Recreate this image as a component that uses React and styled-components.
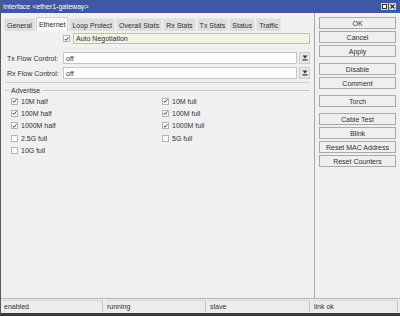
import React from "react";
import styled, { createGlobalStyle } from "styled-components";

const Global = createGlobalStyle`
  html, body { margin: 0; padding: 0; background: #3a3a3a; }
  body { font-family: "Liberation Sans", Arial, sans-serif; font-size: 7px; color: #303030; }
  * { box-sizing: border-box; }
`;

const Window = styled.div`
  width: 400px;
  height: 316px;
  display: flex;
  flex-direction: column;
  background: #f0f0f0;
  border-left: 1px solid #5a5a5a;
  border-bottom: 3px solid #3c3c3c;
  overflow: hidden;
`;

const TitleBar = styled.div`
  height: 13px;
  flex: none;
  background: #3f58a6;
  color: #fff;
  display: flex;
  align-items: center;
  padding: 0 4px 0 2px;
`;

const TitleText = styled.span`
  flex: 1;
  white-space: nowrap;
`;

const TitleBtn = styled.span`
  width: 7px;
  height: 7px;
  margin-left: 1px;
  background: #f4f4f4;
  border: 1px solid #d0d0d0;
  display: flex;
  align-items: center;
  justify-content: center;
`;

const Body = styled.div`
  flex: 1;
  display: flex;
  border-bottom: 1px solid #b8b8b8;
`;

const Main = styled.div`
  width: 314px;
  flex: none;
  border-right: 1px solid #a9a9a9;
  display: flex;
  flex-direction: column;
`;

const Tabs = styled.div`
  display: flex;
  gap: 1px;
  margin: 4px 0 0 3px;
  height: 14px;
  align-items: flex-end;
`;

const Tab = styled.div`
  height: ${(p) => (p.$active ? 14 : 13)}px;
  padding: 0 2px;
  display: flex;
  align-items: center;
  background: ${(p) => (p.$active ? "#fafafa" : "#dedede")};
  border: 1px solid ${(p) => (p.$active ? "#cfcfcf" : "#e6e6e6")};
  border-bottom: none;
  white-space: nowrap;
`;

const AutoRow = styled.div`
  display: flex;
  align-items: center;
  margin: 2px 4px 0 62px;
  height: 11px;
  gap: 3px;
`;

const AutoField = styled.div`
  flex: 1;
  height: 11px;
  background: #f2f3e4;
  border: 1px solid #bfc1ad;
  display: flex;
  align-items: center;
  padding-left: 2px;
`;

const FieldRow = styled.div`
  display: flex;
  align-items: center;
  height: 12px;
  margin: ${(p) => p.$mt}px 4px 0 6px;
`;

const Label = styled.span`
  width: 56px;
  flex: none;
  white-space: nowrap;
`;

const Input = styled.div`
  flex: 1;
  height: 12px;
  background: #fff;
  border: 1px solid #c6c6c6;
  display: flex;
  align-items: center;
  padding-left: 2px;
`;

const DropBtn = styled.div`
  width: 11px;
  height: 12px;
  margin-left: 2px;
  background: #e6e6e6;
  border: 1px solid #cdcdcd;
  display: flex;
  align-items: center;
  justify-content: center;
`;

const Separator = styled.div`
  height: 1px;
  background: #d0d0d0;
  margin: 3px 4px 0 4px;
`;

const GroupTitle = styled.div`
  display: flex;
  align-items: center;
  margin: 2px 4px 0 4px;
  height: 10px;
  gap: 2px;
  &::before {
    content: "";
    width: 4px;
    height: 1px;
    background: #c8c8c8;
  }
  &::after {
    content: "";
    flex: 1;
    height: 1px;
    background: #c8c8c8;
  }
`;

const CheckGrid = styled.div`
  display: grid;
  grid-template-columns: 151px 1fr;
  grid-auto-rows: 12.3px;
  margin: 0 0 0 10px;
`;

const CheckItem = styled.div`
  display: flex;
  align-items: center;
  gap: 3px;
  white-space: nowrap;
`;

const Box = styled.span`
  width: 7px;
  height: 7px;
  flex: none;
  background: #fbfbfb;
  border: 1px solid #b5b5b5;
  display: flex;
  align-items: center;
  justify-content: center;
`;

const Sidebar = styled.div`
  flex: 1;
  display: flex;
  flex-direction: column;
  padding: 4px 4px 0 4px;
  gap: 2px;
`;

const Button = styled.div`
  height: 12px;
  flex: none;
  margin-top: ${(p) => (p.$group ? 4 : 0)}px;
  background: #efefef;
  border: 1px solid #a9a9a9;
  display: flex;
  align-items: center;
  justify-content: center;
  white-space: nowrap;
`;

const StatusBar = styled.div`
  height: 14px;
  flex: none;
  display: flex;
  padding: 1px 2px 0 2px;
  gap: 3px;
  background: #ececec;
`;

const StatusCell = styled.div`
  width: ${(p) => p.$w}px;
  flex: ${(p) => (p.$grow ? 1 : "none")};
  height: 12px;
  border-top: 1px solid #d6d6d6;
  border-right: 1px solid #c4c4c4;
  display: flex;
  align-items: center;
  padding-left: 1px;
  white-space: nowrap;
`;

const Check = ({ on }) => (
  <Box>
    {on && (
      <svg width="6" height="6" viewBox="0 0 6 6">
        <path d="M0.8 3 L2.3 4.6 L5.3 1" stroke="#333" strokeWidth="1.1" fill="none" />
      </svg>
    )}
  </Box>
);

const DropGlyph = () => (
  <svg width="6" height="6" viewBox="0 0 6 6">
    <path d="M0.5 0.5 L5.5 0.5 L3 3.5 Z" fill="#333" />
    <rect x="0.5" y="4.3" width="5" height="1.2" fill="#333" />
  </svg>
);

const tabs = ["General", "Ethernet", "Loop Protect", "Overall Stats", "Rx Stats", "Tx Stats", "Status", "Traffic"];

const checks = [
  ["10M half", true, "10M full", true],
  ["100M half", true, "100M full", true],
  ["1000M half", true, "1000M full", true],
  ["2.5G full", false, "5G full", false],
  ["10G full", false, null, false],
];

const buttons = [
  ["OK", false],
  ["Cancel", false],
  ["Apply", false],
  ["Disable", true],
  ["Comment", false],
  ["Torch", true],
  ["Cable Test", true],
  ["Blink", false],
  ["Reset MAC Address", false],
  ["Reset Counters", false],
];

export default function App() {
  return (
    <>
      <Global />
      <Window>
        <TitleBar>
          <TitleText>Interface &lt;ether1-gateway&gt;</TitleText>
          <TitleBtn>
            <svg width="5" height="5" viewBox="0 0 5 5">
              <rect x="0.5" y="0.5" width="4" height="4" fill="none" stroke="#333" strokeWidth="1" />
            </svg>
          </TitleBtn>
          <TitleBtn>
            <svg width="5" height="5" viewBox="0 0 5 5">
              <path d="M0.5 0.5 L4.5 4.5 M4.5 0.5 L0.5 4.5" stroke="#222" strokeWidth="1.2" />
            </svg>
          </TitleBtn>
        </TitleBar>
        <Body>
          <Main>
            <Tabs>
              {tabs.map((t) => (
                <Tab key={t} $active={t === "Ethernet"}>
                  {t}
                </Tab>
              ))}
            </Tabs>
            <AutoRow>
              <Check on />
              <AutoField>Auto Negotiation</AutoField>
            </AutoRow>
            <FieldRow $mt={8}>
              <Label>Tx Flow Control:</Label>
              <Input>off</Input>
              <DropBtn>
                <DropGlyph />
              </DropBtn>
            </FieldRow>
            <FieldRow $mt={3}>
              <Label>Rx Flow Control:</Label>
              <Input>off</Input>
              <DropBtn>
                <DropGlyph />
              </DropBtn>
            </FieldRow>
            <Separator />
            <GroupTitle>Advertise</GroupTitle>
            <CheckGrid>
              {checks.map(([a, aOn, b, bOn]) => (
                <React.Fragment key={a}>
                  <CheckItem>
                    <Check on={aOn} />
                    {a}
                  </CheckItem>
                  <CheckItem>
                    {b && (
                      <>
                        <Check on={bOn} />
                        {b}
                      </>
                    )}
                  </CheckItem>
                </React.Fragment>
              ))}
            </CheckGrid>
          </Main>
          <Sidebar>
            {buttons.map(([b, g]) => (
              <Button key={b} $group={g}>
                {b}
              </Button>
            ))}
          </Sidebar>
        </Body>
        <StatusBar>
          <StatusCell $w={100}>enabled</StatusCell>
          <StatusCell $w={100}>running</StatusCell>
          <StatusCell $w={101}>slave</StatusCell>
          <StatusCell $grow>link ok</StatusCell>
        </StatusBar>
      </Window>
    </>
  );
}
